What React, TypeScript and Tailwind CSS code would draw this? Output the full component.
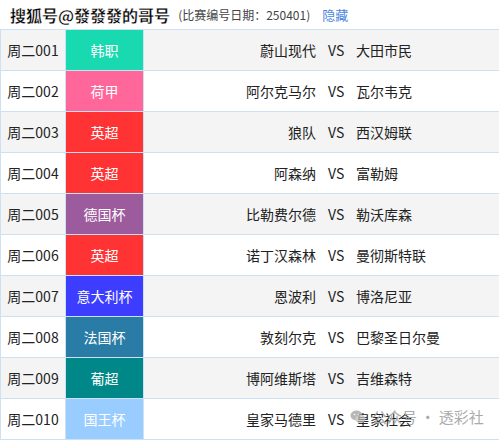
import React from 'react';

type Match = {
  no: string;
  league: string;
  color: string;
  home: string;
  away: string;
};

const matches: Match[] = [
  { no: '周二001', league: '韩职', color: 'bg-[#18d9b0]', home: '蔚山现代', away: '大田市民' },
  { no: '周二002', league: '荷甲', color: 'bg-[#ff6699]', home: '阿尔克马尔', away: '瓦尔韦克' },
  { no: '周二003', league: '英超', color: 'bg-[#ff3333]', home: '狼队', away: '西汉姆联' },
  { no: '周二004', league: '英超', color: 'bg-[#ff3333]', home: '阿森纳', away: '富勒姆' },
  { no: '周二005', league: '德国杯', color: 'bg-[#9c5b9c]', home: '比勒费尔德', away: '勒沃库森' },
  { no: '周二006', league: '英超', color: 'bg-[#ff3333]', home: '诺丁汉森林', away: '曼彻斯特联' },
  { no: '周二007', league: '意大利杯', color: 'bg-[#3d3dff]', home: '恩波利', away: '博洛尼亚' },
  { no: '周二008', league: '法国杯', color: 'bg-[#297ca6]', home: '敦刻尔克', away: '巴黎圣日尔曼' },
  { no: '周二009', league: '葡超', color: 'bg-[#008888]', home: '博阿维斯塔', away: '吉维森特' },
  { no: '周二010', league: '国王杯', color: 'bg-[#99ccff]', home: '皇家马德里', away: '皇家社会' },
];

export default function App() {
  return (
    <div className="relative w-[499px] h-[442px] bg-white overflow-hidden font-['Noto_Sans_CJK_SC',sans-serif]">
      {/* Header */}
      <div className="h-[29px] flex items-center pl-[10px]">
        <span
          className="text-[16px] font-bold text-black leading-none"
          style={{ WebkitTextStroke: '0.3px #fff' }}
        >
          搜狐号@發發發的哥号
        </span>
        <span className="ml-[8px] text-[12px] text-[#444] leading-none">(比赛编号日期：250401)</span>
        <span className="ml-[12px] text-[13px] text-[#4d84e0] leading-none">隐藏</span>
      </div>

      {/* Table */}
      <div className="w-[499px] border-t border-l border-[#cde1f2]">
        {matches.map((m, i) => (
          <div
            key={m.no}
            className={`flex h-[41px] border-b border-[#cde1f2] text-[14px] text-[#222] ${
              i % 2 === 0 ? 'bg-[#f4f4f4]' : 'bg-white'
            }`}
          >
            <div className="w-[64px] shrink-0 flex items-center justify-center">{m.no}</div>
            <div
              className={`w-[79px] shrink-0 flex items-center justify-center text-white border-l border-r border-[#cde1f2] ${m.color}`}
            >
              {m.league}
            </div>
            <div className="flex-1 flex items-center">
              <div className="w-[172px] text-right">{m.home}</div>
              <div className="ml-[12px] w-[16px] text-center">VS</div>
              <div className="ml-[12px]">{m.away}</div>
            </div>
          </div>
        ))}
      </div>

      {/* Watermark */}
      <div className="absolute left-[350px] top-[406px] flex items-center gap-[4px] text-[15px] text-[#aaa] pointer-events-none">
        <svg width="16" height="16" viewBox="0 0 16 16" className="opacity-70">
          <ellipse cx="6.5" cy="6.5" rx="6" ry="5" fill="#9a9a9a" />
          <ellipse cx="10.5" cy="10" rx="5" ry="4.2" fill="#bdbdbd" />
          <circle cx="4.5" cy="5.5" r="0.8" fill="#fff" />
          <circle cx="8.5" cy="5.5" r="0.8" fill="#fff" />
        </svg>
        <span className="ml-[2px]">公众号 · 透彩社</span>
      </div>
    </div>
  );
}
